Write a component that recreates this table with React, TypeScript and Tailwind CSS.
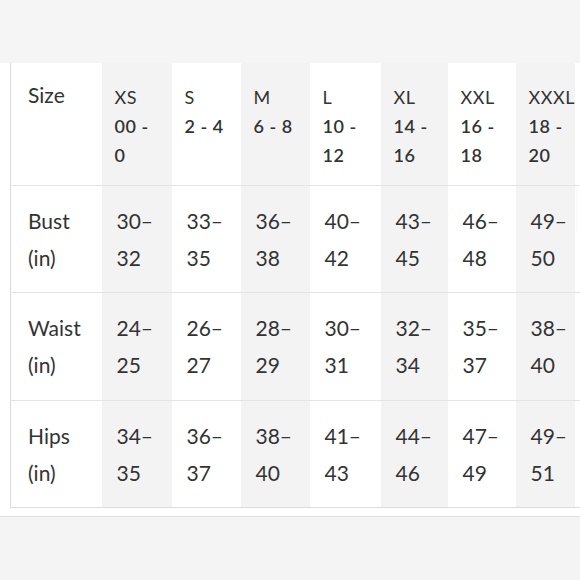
import React from 'react';

type Col = { size: string; range: string[]; bust: string[]; waist: string[]; hips: string[]; gray: boolean; w: string };

const cols: Col[] = [
  { size: 'XS', range: ['00 -', '0'], bust: ['30–', '32'], waist: ['24–', '25'], hips: ['34–', '35'], gray: true, w: 'w-[70px]' },
  { size: 'S', range: ['2 - 4'], bust: ['33–', '35'], waist: ['26–', '27'], hips: ['36–', '37'], gray: false, w: 'w-[69px]' },
  { size: 'M', range: ['6 - 8'], bust: ['36–', '38'], waist: ['28–', '29'], hips: ['38–', '40'], gray: true, w: 'w-[69px]' },
  { size: 'L', range: ['10 -', '12'], bust: ['40–', '42'], waist: ['30–', '31'], hips: ['41–', '43'], gray: false, w: 'w-[71px]' },
  { size: 'XL', range: ['14 -', '16'], bust: ['43–', '45'], waist: ['32–', '34'], hips: ['44–', '46'], gray: true, w: 'w-[67px]' },
  { size: 'XXL', range: ['16 -', '18'], bust: ['46–', '48'], waist: ['35–', '37'], hips: ['47–', '49'], gray: false, w: 'w-[68px]' },
  { size: 'XXXL', range: ['18 -', '20'], bust: ['49–', '50'], waist: ['38–', '40'], hips: ['49–', '51'], gray: true, w: 'w-[59px]' },
];

const rows: { label: string; key: 'bust' | 'waist' | 'hips'; h: string }[] = [
  { label: 'Bust', key: 'bust', h: 'h-[107px]' },
  { label: 'Waist', key: 'waist', h: 'h-[108px]' },
  { label: 'Hips', key: 'hips', h: 'h-[107px]' },
];

export default function App() {
  return (
    <div
      className="relative w-[580px] h-[580px] overflow-hidden bg-[#f4f4f4] text-[#333]"
      style={{ fontFamily: 'Lato, "Open Sans", sans-serif' }}
    >
      <div className="h-[63px] bg-[#f5f5f5]" />

      {/* Chart panel */}
      <div className="bg-white pl-[10px] pb-[8px] border-b border-[#dedede]">
        <table className="border-collapse border-l border-b border-[#dcdcdc] table-fixed">
          <thead>
            <tr className="h-[122px] border-b border-[#e4e4e4]">
              <th className="w-[91px] align-top text-left font-normal pl-[17px] pt-[17px] text-[21px] leading-[29px]">
                Size
              </th>
              {cols.map((c) => (
                <th
                  key={c.size}
                  className={`${c.w} ${c.gray ? 'bg-[#f3f3f3]' : 'bg-white'} align-top text-left pl-[13px] pt-[20px] text-[18px] leading-[29px] tracking-[0.03em] whitespace-nowrap`}
                >
                  <div className="font-normal">{c.size}</div>
                  {c.range.map((r) => (
                    <div key={r} className="font-semibold">{r}</div>
                  ))}
                </th>
              ))}
              <th className="w-[5px] bg-white" />
            </tr>
          </thead>
          <tbody>
            {rows.map((r, i) => (
              <tr key={r.key} className={`${r.h} ${i < rows.length - 1 ? 'border-b border-[#e4e4e4]' : ''}`}>
                <td className="align-middle pl-[17px] text-[21px] leading-[37px]">
                  <div>{r.label}</div>
                  <div>(in)</div>
                </td>
                {cols.map((c) => (
                  <td
                    key={c.size}
                    className={`${c.gray ? 'bg-[#f3f3f3]' : 'bg-white'} align-middle pl-[15px] text-[21px] leading-[37px] whitespace-nowrap`}
                  >
                    {c[r.key].map((v) => (
                      <div key={v}>{v}</div>
                    ))}
                  </td>
                ))}
                <td className="bg-white" />
              </tr>
            ))}
          </tbody>
        </table>
      </div>

      {/* edge of a floating card on the right */}
      <div className="absolute left-[577px] top-[184px] w-[12px] h-[50px] rounded-l-[6px] bg-white shadow-[0_0_2px_rgba(0,0,0,0.08)]" />
    </div>
  );
}
